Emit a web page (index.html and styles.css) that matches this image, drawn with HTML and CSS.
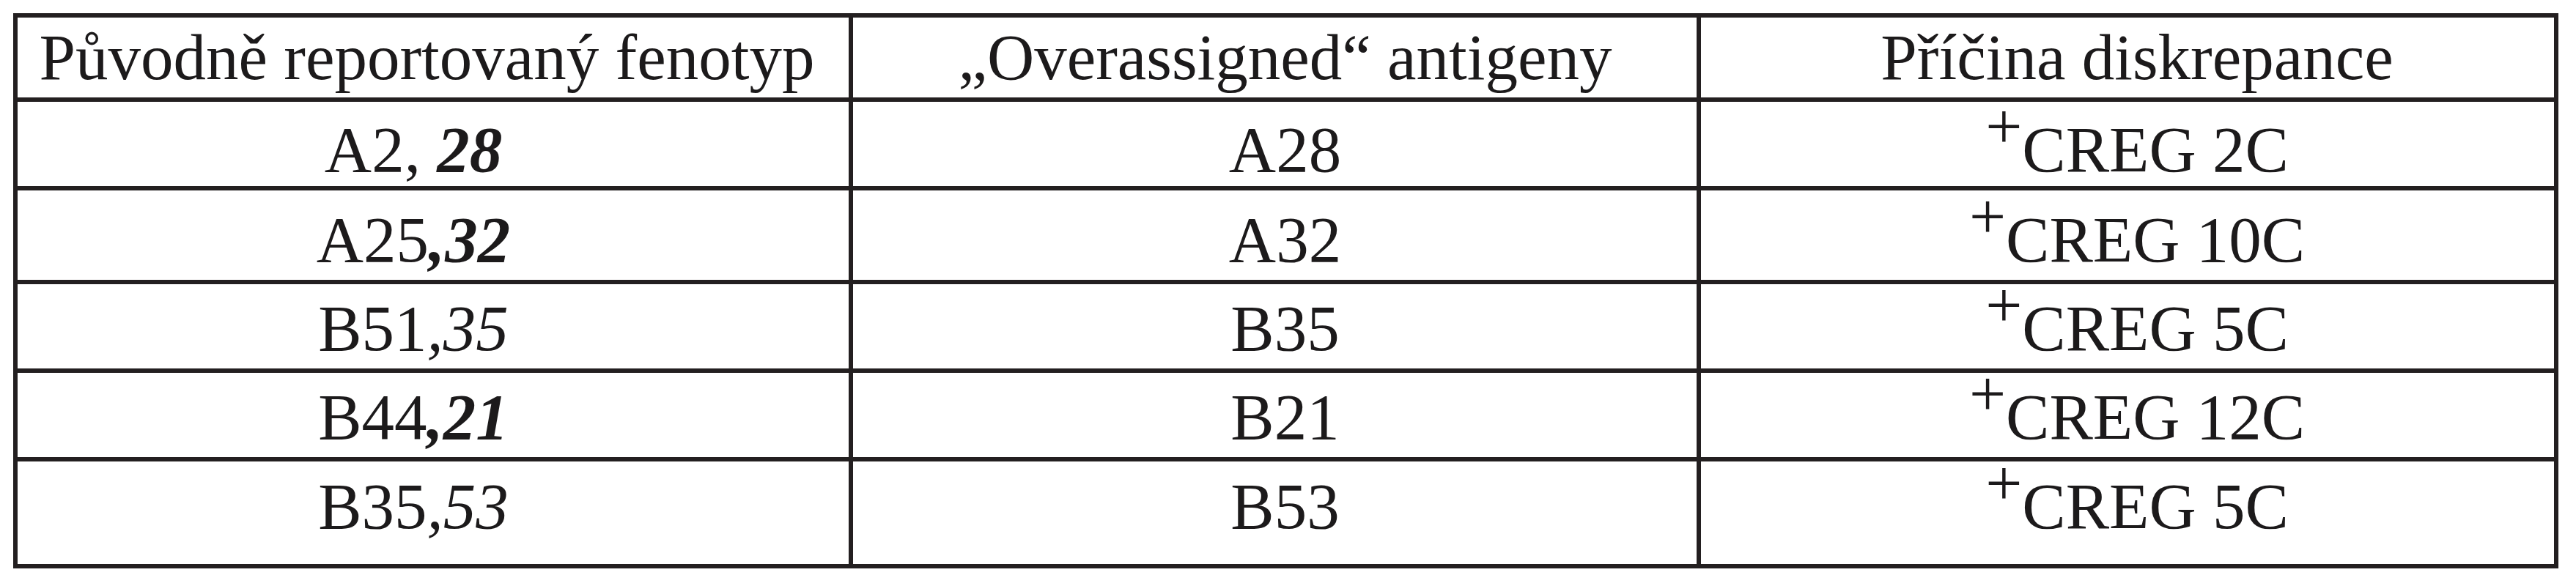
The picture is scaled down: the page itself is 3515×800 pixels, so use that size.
FILE: index.html
```html
<!DOCTYPE html>
<html lang="cs">
<head>
<meta charset="utf-8">
<title>Tabulka</title>
<link rel="stylesheet" href="styles.css">
</head>
<body>
<div class="tbl" role="table">
  <div class="row head" role="row">
    <div class="cell c1" role="columnheader">Původně reportovaný fenotyp</div>
    <div class="cell c2" role="columnheader">„Overassigned“ antigeny</div>
    <div class="cell c3" role="columnheader">Příčina diskrepance</div>
  </div>
  <div class="row r1" role="row">
    <div class="cell c1" role="cell">A2, <i class="b">28</i></div>
    <div class="cell c2" role="cell">A28</div>
    <div class="cell c3" role="cell"><span class="plus">+</span>CREG 2C</div>
  </div>
  <div class="row r2" role="row">
    <div class="cell c1" role="cell">A25<i class="b">,32</i></div>
    <div class="cell c2" role="cell">A32</div>
    <div class="cell c3" role="cell"><span class="plus">+</span>CREG 10C</div>
  </div>
  <div class="row r3" role="row">
    <div class="cell c1" role="cell">B51<i>,35</i></div>
    <div class="cell c2" role="cell">B35</div>
    <div class="cell c3" role="cell"><span class="plus">+</span>CREG 5C</div>
  </div>
  <div class="row r4" role="row">
    <div class="cell c1" role="cell">B44<i class="b">,21</i></div>
    <div class="cell c2" role="cell">B21</div>
    <div class="cell c3" role="cell"><span class="plus">+</span>CREG 12C</div>
  </div>
  <div class="row r5" role="row">
    <div class="cell c1" role="cell">B35<i>,53</i></div>
    <div class="cell c2" role="cell">B53</div>
    <div class="cell c3" role="cell"><span class="plus">+</span>CREG 5C</div>
  </div>
</div>
</body>
</html>
```
FILE: styles.css
```css
html, body {
  margin: 0;
  padding: 0;
  background: #ffffff;
}

body {
  font-family: "Liberation Serif", "Times New Roman", serif;
  color: #1c1a1b;
}

.tbl {
  display: flex;
  flex-direction: column;
  width: fit-content;
  margin: 18px 0 0 18px;
  border: 6px solid #231f20;
}

.row {
  display: grid;
  grid-template-columns: 1140px 1157px 1164px;
  border-bottom: 6px solid #231f20;
  box-sizing: border-box;
}

.row.r5 {
  border-bottom: none;
}

.head { height: 115px; }
.r1 { height: 121px; }
.r2 { height: 128px; }
.r3 { height: 121px; }
.r4 { height: 121px; }
.r5 { height: 140px; }

.cell {
  box-sizing: border-box;
  font-size: 89px;
  line-height: 89px;
  text-align: center;
  white-space: nowrap;
}

.c1, .c2 {
  border-right: 6px solid #231f20;
}

.head .cell { padding-top: 10px; }
.r1 .cell { padding-top: 21px; }
.r2 .cell { padding-top: 23px; }
.r3 .cell { padding-top: 16px; }
.r4 .cell { padding-top: 16px; }
.r5 .cell { padding-top: 17px; }

.head .c1 { padding-right: 17px; }
.row:not(.head) .c1 { padding-right: 54px; }
.c2 { padding-left: 28px; }
.c3 { padding-left: 26px; }

i {
  font-style: italic;
}

i.b {
  font-weight: bold;
}

.plus {
  vertical-align: 32px;
  line-height: 0;
}
```
